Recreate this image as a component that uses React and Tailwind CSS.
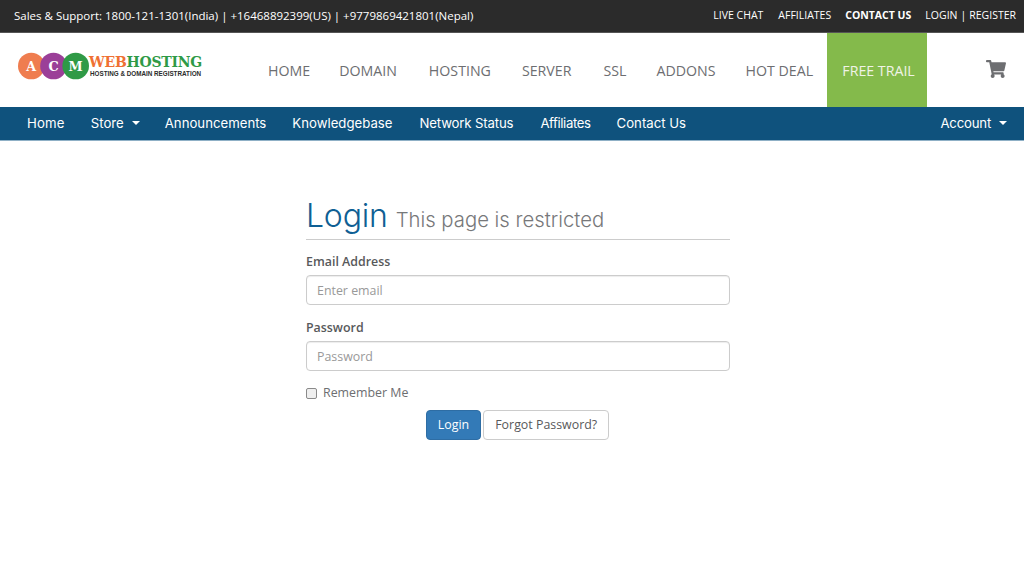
import React from "react";
import { FaShoppingCart } from "react-icons/fa";

const os = "font-['Open_Sans',sans-serif]";
const ral = "font-['Inter',sans-serif]";

function Caret() {
  return <span className="inline-block ml-2 mb-[2px] w-0 h-0 border-x-[4px] border-x-transparent border-t-[4px] border-t-white align-middle" />;
}

function Logo() {
  return (
    <div className="flex items-center ml-[18px]">
      <svg width="71" height="28" viewBox="0 0 72 28" className="shrink-0">
        <circle cx="13.5" cy="14" r="13.5" fill="#ef7d4f" />
        <circle cx="36" cy="14" r="13.5" fill="#9b3f98" />
        <path d="M41 2.5 A13.5 13.5 0 0 0 41 25.5 A13.5 13.5 0 0 1 41 2.5" fill="#7e2f6e" />
        <circle cx="58.5" cy="14" r="13.5" fill="#2f9a46" />
        <text x="13.5" y="19" textAnchor="middle" fontFamily="'DejaVu Serif',serif" fontWeight="700" fontSize="13" fill="#fff">A</text>
        <text x="36" y="19" textAnchor="middle" fontFamily="'DejaVu Serif',serif" fontWeight="700" fontSize="13" fill="#fff">C</text>
        <text x="58.5" y="19" textAnchor="middle" fontFamily="'DejaVu Serif',serif" fontWeight="700" fontSize="13" fill="#fff">M</text>
      </svg>
      <div className="flex flex-col">
        <div className="font-['DejaVu_Serif',serif] font-bold text-[14px] leading-[15px] tracking-[-0.25px] whitespace-nowrap">
          <span className="text-[#ef7033]">WEB</span><span className="text-[#2f9a46]">HOSTING</span>
        </div>
        <div className="ml-[1px] font-['Liberation_Sans',sans-serif] font-bold text-[6.3px] leading-[8px] text-[#2b2b2b] whitespace-nowrap">HOSTING &amp; DOMAIN REGISTRATION</div>
      </div>
    </div>
  );
}

function Field({ label, placeholder, type }) {
  return (
    <div className="mb-[14px]">
      <label className="block text-[12.4px] font-semibold text-[#58595b] leading-[18px] mb-[4px]">{label}</label>
      <input type={type} placeholder={placeholder} className="block w-full h-[30px] rounded-[4px] border border-[#cccccc] bg-white px-[10px] text-[12.4px] placeholder:text-[#999999] shadow-[inset_0_1px_1px_rgba(0,0,0,0.075)] outline-none" />
    </div>
  );
}

export default function App() {
  const header = [
    ["HOME", "ml-[268px]"], ["DOMAIN", "ml-[29px]"], ["HOSTING", "ml-[32px]"], ["SERVER", "ml-[31px]"],
    ["SSL", "ml-[32px]"], ["ADDONS", "ml-[30px]"], ["HOT DEAL", "ml-[30px]"],
  ];
  return (
    <div className={`${os} w-full min-h-[579px] bg-white`}>
      <div className="h-[33px] bg-[#2b2b2b] border-b border-[#555555] flex items-center justify-between pl-[14px] pr-[8px] text-[11.5px] text-white">
        <div className="whitespace-nowrap">Sales &amp; Support: 1800-121-1301(India) | +16468892399(US) | +9779869421801(Nepal)</div>
        <div className="flex items-center text-[10.5px] whitespace-nowrap">
          <span>LIVE CHAT</span>
          <span className="ml-[15px]">AFFILIATES</span>
          <span className="ml-[14px] font-bold">CONTACT US</span>
          <span className="ml-[14px]">LOGIN</span>
          <span className="mx-[3px]">|</span>
          <span>REGISTER</span>
        </div>
      </div>

      <div className="relative h-[74px] flex items-center text-[14.2px] text-[#6d6e71]">
        <div className="absolute left-0 top-[19px]"><Logo /></div>
        {header.map(([t, m]) => (
          <span key={t} className={`${m} mt-[2px] whitespace-nowrap`}>{t}</span>
        ))}
        <div className="ml-[14px] w-[100px] h-full pt-[2px] pl-[3px] bg-[#84ba4b] text-[#f0f3e6] flex items-center justify-center whitespace-nowrap">FREE TRAIL</div>
        <FaShoppingCart className="ml-[59px] mb-[2px] text-[#6d6e71]" size={20} />
      </div>

      <div className={`${ral} h-[34px] bg-[#0f527d] text-white text-[13.2px] flex items-center justify-between pl-[27px] pr-[17px] border-b border-[#8fb0c6]`}>
        <div className="flex items-center whitespace-nowrap">
          <span className="tracking-[0.2px]">Home</span>
          <span className="ml-[26px]">Store<Caret /></span>
          <span className="ml-[25px]">Announcements</span>
          <span className="ml-[26px]">Knowledgebase</span>
          <span className="ml-[27px] tracking-[-0.15px]">Network Status</span>
          <span className="ml-[27px] tracking-[-0.4px]">Affiliates</span>
          <span className="ml-[26px]">Contact Us</span>
        </div>
        <span className="whitespace-nowrap tracking-[-0.2px]">Account<Caret /></span>
      </div>

      <main className="w-[424px] ml-[306px] pt-[57px]">
        <div className={`${ral} flex items-baseline border-b border-[#cccccc] h-[42px] mb-[13px] whitespace-nowrap`}>
          <h1 className="text-[32px] leading-[36px] font-light text-[#0f5f94] tracking-[-0.2px]">Login</h1>
          <span className="ml-[8px] text-[20.3px] font-light text-[#77787a]">This page is restricted</span>
        </div>
        <Field label="Email Address" placeholder="Enter email" type="email" />
        <Field label="Password" placeholder="Password" type="password" />
        <label className="flex items-center text-[12.4px] text-[#6d6e71] mt-[-1px] h-[18px]">
          <input type="checkbox" className="appearance-none w-[11px] h-[11px] mr-[6px] rounded-[2px] border border-[#8a8a8a] bg-[#efefef]" />
          Remember Me
        </label>
        <div className="flex justify-center gap-[2px] mt-[8px] text-[12.4px] pr-[1px]">
          <button className="h-[30px] px-[11px] rounded-[4px] bg-[#337ab7] border border-[#2e6da4] text-white">Login</button>
          <button className="h-[30px] px-[11px] rounded-[4px] bg-white border border-[#cccccc] text-[#58595b]">Forgot Password?</button>
        </div>
      </main>
    </div>
  );
}
